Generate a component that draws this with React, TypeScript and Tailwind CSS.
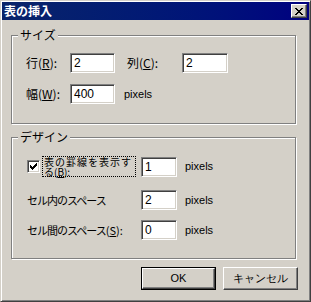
const jp = "font-['Noto_Sans_CJK_JP',sans-serif]";
const lat = "font-['Liberation_Sans',Arial,sans-serif]";

function Field({ value, w }: { value: string; w: string }) {
	return (
		<div
			className={`${w} h-[20px] bg-white border border-t-[#808080] border-l-[#808080] border-r-white border-b-white shadow-[inset_1px_1px_0_#404040,inset_-1px_-1px_0_#d4d0c8] pl-[3px] flex items-center text-[12px] text-black ${lat}`}
		>
			{value}
		</div>
	);
}

function Btn({ label, def }: { label: string; def?: boolean }) {
	return (
		<div className={`w-[75px] h-[23px] ${def ? "border border-black" : ""}`}>
			<div className="w-full h-full border border-t-white border-l-white border-r-[#404040] border-b-[#404040] shadow-[inset_-1px_-1px_0_#808080] flex items-center justify-center text-[11px] text-black">
				{label}
			</div>
		</div>
	);
}

function Group({ title, h, children }: { title: string; h: string; children: React.ReactNode }) {
	return (
		<div className={`relative w-[285px] ${h} border border-[#808080] shadow-[inset_1px_1px_0_#fff,1px_1px_0_#fff]`}>
			<span className={`absolute left-[6px] top-[-8px] px-[2px] bg-[#d4d0c8] text-[12px] leading-[14px] ${jp}`}>{title}</span>
			{children}
		</div>
	);
}

export default function App() {
	return (
		<div className={`w-[311px] h-[302px] bg-[#d4d0c8] border border-t-[#d4d0c8] border-l-[#d4d0c8] border-r-[#404040] border-b-[#404040] text-black ${jp}`}>
			<div className="w-full h-full shadow-[inset_1px_1px_0_#fff,inset_-1px_-1px_0_#808080] p-[1px]">
				{/* title bar */}
				<div className="h-[18px] bg-gradient-to-r from-[#0a246a] to-[#000080] flex items-center justify-between pl-[2px] pr-[2px]">
					<span className="text-white font-bold text-[12px] leading-none">表の挿入</span>
					<div className="w-[16px] h-[14px] bg-[#d4d0c8] border border-t-white border-l-white border-r-[#404040] border-b-[#404040] shadow-[inset_-1px_-1px_0_#808080] flex items-center justify-center">
						<svg width="8" height="7" viewBox="0 0 8 7" shapeRendering="crispEdges">
							<path d="M0 0h2v1h-2zM6 0h2v1h-2zM1 1h2v1h-2zM5 1h2v1h-2zM2 2h4v1h-4zM3 3h2v1h-2zM2 4h4v1h-4zM1 5h2v1h-2zM5 5h2v1h-2zM0 6h2v1h-2zM6 6h2v1h-2z" fill="#000" />
						</svg>
					</div>
				</div>

				<div className="pl-[9px] pt-[15px]">
					<Group title="サイズ" h="h-[89px]">
						<div className="pl-[14px] pt-[17px] text-[12px]">
							<div className="flex items-center h-[20px]">
								<span className="w-[44px]">
									行(<span className="underline">R</span>):
								</span>
								<Field value="2" w="w-[45px]" />
								<span className="ml-[12px] w-[55px]">
									列(<span className="underline">C</span>):
								</span>
								<Field value="2" w="w-[46px]" />
							</div>
							<div className="flex items-center h-[20px] mt-[11px]">
								<span className="w-[44px]">
									幅(<span className="underline">W</span>):
								</span>
								<Field value="400" w="w-[45px]" />
								<span className={`ml-[9px] text-[11px] ${lat}`}>pixels</span>
							</div>
						</div>
					</Group>

					<div className="mt-[13px]">
						<Group title="デザイン" h="h-[122px]">
							<div className="pl-[15px] pt-[18px] text-[12px]">
								<div className="flex items-center h-[21px]">
									<div className="w-[13px] h-[13px] bg-white border border-t-[#808080] border-l-[#808080] border-r-white border-b-white shadow-[inset_1px_1px_0_#404040,inset_-1px_-1px_0_#d4d0c8] flex items-center justify-center">
										<svg width="7" height="7" viewBox="0 0 7 7" shapeRendering="crispEdges">
											<path d="M6 0h1v3h-1zM5 1h1v3h-1zM4 2h1v3h-1zM3 3h1v3h-1zM2 4h1v3h-1zM1 3h1v3h-1zM0 2h1v3h-1z" fill="#000" />
										</svg>
									</div>
									<div className="ml-[2px] w-[94px] h-[21px] border border-dotted border-black leading-[10px] pl-[1px] text-[10px] tracking-[1px] whitespace-nowrap">
										表の罫線を表示す
										<br />
										<span className="tracking-normal">
											る(<span className="underline">B</span>):
										</span>
									</div>
									<div className="ml-[5px]">
										<Field value="1" w="w-[36px]" />
									</div>
									<span className={`ml-[8px] text-[11px] ${lat}`}>pixels</span>
								</div>
								<div className="flex items-center h-[20px] mt-[13px]">
									<span className="w-[114px] text-[11px] tracking-[-1px]">セル内のスペース</span>
									<Field value="2" w="w-[36px]" />
									<span className={`ml-[8px] text-[11px] ${lat}`}>pixels</span>
								</div>
								<div className="flex items-center h-[20px] mt-[10px]">
									<span className="w-[114px] text-[11px] whitespace-nowrap">
										<span className="tracking-[-1px]">セル間のスペース</span>(<span className="underline">S</span>):
									</span>
									<Field value="0" w="w-[36px]" />
									<span className={`ml-[8px] text-[11px] ${lat}`}>pixels</span>
								</div>
							</div>
						</Group>
					</div>

					<div className={`flex mt-[8px] pl-[130px] gap-[7px] ${lat}`}>
						<Btn label="OK" def />
						<Btn label="キャンセル" />
					</div>
				</div>
			</div>
		</div>
	);
}
